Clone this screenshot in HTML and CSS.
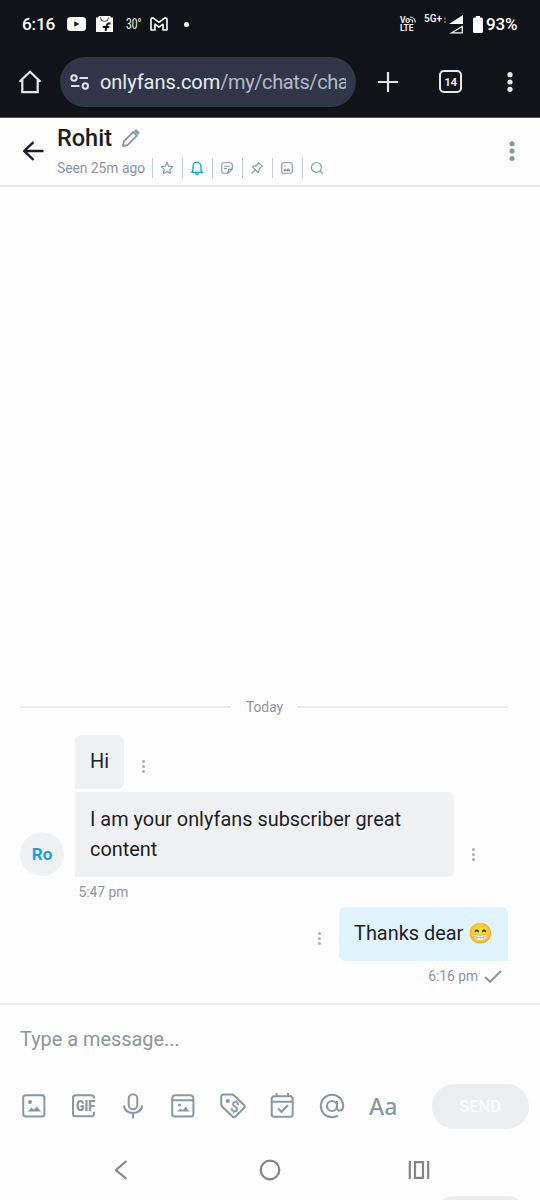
FILE: index.html
```html
<!DOCTYPE html>
<html lang="en">
<head>
    <meta charset="utf-8">
    <title>Chat with Rohit</title>
    <link rel="stylesheet" href="styles.css">
</head>
<body>
<div class="phone">

    <div class="status-bar">
        <span class="clock">6:16</span>
        <svg class="st-youtube" width="19" height="14" viewBox="0 0 19 14"><rect width="19" height="14" rx="3.5" fill="#fff"/><path d="M7.3 4.2v5.6L12.3 7z" fill="#121318"/></svg>
        <svg class="st-shop" width="17" height="17" viewBox="0 0 17 17"><path d="M0 1.5h2l1-1.5h11l1 1.5h2V16H0z" fill="#fff"/><path d="M4.5 1.5a4 4 0 0 0 8 0" fill="none" stroke="#121318" stroke-width="0.8"/><path d="M14.5 7.5h-1.7c-1.4 0-1.7.6-2 1.8L9.5 15M6.8 11h6.5" fill="none" stroke="#121318" stroke-width="1.9"/></svg>
        <span class="temp">30°</span>
        <svg class="st-mail" width="18" height="14" viewBox="0 0 18 14"><path d="M1 13V2.5C1 .8 2.6.5 3.8 1.4L9 5.3l5.2-3.9C15.4.5 17 .8 17 2.5V13h-4V7.2L9 10.2 5 7.2V13z" fill="none" stroke="#fff" stroke-width="1.6" stroke-linejoin="round"/></svg>
        <span class="dot"></span>
        <span class="volte"><span>Vo<svg width="6" height="7" viewBox="0 0 6 7"><path d="M0 1c3 0 5.3 2.3 5.3 5.5M0 3.5c1.7 0 2.8 1.2 2.8 3" fill="none" stroke="#fff" stroke-width="1.1"/></svg></span><span>LTE</span></span>
        <span class="net">5G+</span>
        <svg class="st-signal" width="19" height="19" viewBox="0 0 19 19"><path d="M1 2.5v2M1 6v2" stroke="#666870" stroke-width="2"/><path d="M19 0v9H5z" fill="#fff"/><path d="M18.3 11.5v6.3H7.5z" fill="none" stroke="#fff" stroke-width="1.2"/></svg>
        <svg class="st-battery" width="10" height="17" viewBox="0 0 10 17"><path d="M3 0h4v1.5h1.5Q10 1.5 10 3v12.5Q10 17 8.5 17h-7Q0 17 0 15.500V3q0-1.5 1.5-1.5H3z" fill="#fff"/></svg>
        <span class="percent">93%</span>
    </div>

    <div class="browser-bar">
        <svg class="home" width="24" height="24" viewBox="0 0 24 24"><path d="M1.5 11.8 12 1.8l10.5 10M4.3 9.500v12.7h15.4V9.500" fill="none" stroke="#e6e6ee" stroke-width="2.2"/></svg>
        <div class="url-bar">
            <svg width="20" height="16" viewBox="0 0 20 16" fill="none" stroke="#dfe3ef" stroke-width="2"><circle cx="4" cy="4" r="2.7"/><path d="M9.5 4H18M1 12h8.5"/><circle cx="15.3" cy="12" r="2.7"/></svg>
            <div class="url">onlyfans.com<span>/my/chats/chat</span></div>
        </div>
        <svg class="plus" width="20" height="20" viewBox="0 0 20 20"><path d="M10 0v20M0 10h20" stroke="#e6e6ee" stroke-width="2.2"/></svg>
        <div class="tabs">14</div>
        <svg class="menu" width="6" height="20" viewBox="0 0 6 20" fill="#e6e6ee"><circle cx="3" cy="2.7" r="2.6"/><circle cx="3" cy="10" r="2.6"/><circle cx="3" cy="17.3" r="2.6"/></svg>
    </div>

    <div class="chat-header">
        <svg class="back" width="22" height="20" viewBox="0 0 22 20"><path d="M20.5 10H1.500M10.500 1.200 1.200 10l9.300 8.800" fill="none" stroke="#1b1d22" stroke-width="2.3"/></svg>
        <div class="who">
            <div class="name-row">
                <span class="name">Rohit</span>
                <svg width="18" height="18" viewBox="0 0 18 18"><path d="M1 17l.8-4.600L11.300 3l3.600 3.600-9.500 9.500z" fill="none" stroke="#8a96a3" stroke-width="1.8" stroke-linejoin="round"/><path d="M12 2l1.300-1.300q.8-.8 1.700 0l2.200 2.200q.8.8 0 1.700L15.900 5.900z" fill="#8a96a3"/></svg>
            </div>
            <div class="tools">
                <span class="seen">Seen 25m ago</span>
                <span class="tool"><svg width="14" height="14" viewBox="0 0 24 24"><path d="M12 2.500l2.900 6.400 7 .8-5.200 4.700 1.400 6.900-6.100-3.500-6.100 3.500 1.400-6.900L2.100 9.700l7-.8z"/></svg></span>
                <span class="tool active"><svg width="14" height="14" viewBox="0 0 24 24"><path d="M1.500 19.500h21M4 19c1.500-2 1.200-5 1.200-8.500C5.200 6 8 2 12 2s6.800 4 6.800 8.500c0 3.500-.3 6.500 1.200 8.500M9.500 20c.2 3.500 4.800 3.500 5 0"/></svg></span>
                <span class="tool"><svg width="14" height="14" viewBox="0 0 24 24"><path d="M6 3h12q3 0 3 3v8l-7 7H6q-3 0-3-3V6q0-3 3-3zM14 21v-4q0-3 3-3h4M7 9h10M7 13h5"/></svg></span>
                <span class="tool"><svg width="14" height="14" viewBox="0 0 24 24"><path d="M14.500 2.500l7 7-2.500.7-3.800 3.800c.7 2.500.2 4.300-1.200 5.800L4.200 10c1.500-1.400 3.300-1.900 5.800-1.200L13.800 5zM9 15l-6.500 6.500"/></svg></span>
                <span class="tool"><svg width="14" height="14" viewBox="0 0 24 24"><rect x="3" y="3" width="18" height="18" rx="3"/><path d="M7 8.500h2.500M7 16.500l2-2 2 2 3-3 3 3z"/></svg></span>
                <span class="tool"><svg width="14" height="14" viewBox="0 0 24 24"><circle cx="11" cy="11" r="8.500"/><path d="M17 17l5 5"/></svg></span>
            </div>
        </div>
        <svg class="more" width="6" height="20" viewBox="0 0 6 20" fill="#8a9299"><circle cx="3" cy="2.700" r="2.500"/><circle cx="3" cy="10.100" r="2.500"/><circle cx="3" cy="17.500" r="2.500"/></svg>
    </div>

    <div class="messages">
        <div class="day"><span>Today</span></div>
        <div class="msg first">
            <div class="bubble hi">Hi</div>
            <div class="dots"><i></i><i></i><i></i></div>
        </div>
        <div class="msg">
            <div class="avatar">Ro</div>
            <div class="bubble long">I am your onlyfans subscriber great content</div>
            <div class="dots"><i></i><i></i><i></i></div>
        </div>
        <div class="time">5:47 pm</div>
        <div class="msg mine">
            <div class="dots"><i></i><i></i><i></i></div>
            <div class="bubble sent">Thanks dear <span class="emoji">😁</span></div>
        </div>
        <div class="time mine">6:16 pm <svg width="18" height="13" viewBox="0 0 18 13"><path d="M1 7l5 4.800L17 1" fill="none" stroke="#8a96a3" stroke-width="2"/></svg></div>
    </div>

    <div class="composer">
        <div class="placeholder">Type a message...</div>
        <div class="actions">
            <svg class="ic" viewBox="0 0 26 26"><rect x="2.200" y="2.200" width="21.200" height="21.200" rx="2.500"/><circle class="fill" cx="9" cy="9" r="2"/><path class="fill" d="M6.500 18.500l4-4 2.500 2.200 3-3.200 4 5z"/></svg>
            <svg class="ic" viewBox="0 0 26 26"><path d="M24 5.500V4.700q0-2.500-2.500-2.500h-16q-2.500 0-2.500 2.500v16q0 2.500 2.500 2.500h16q2.500 0 2.500-2.500v-2"/><text x="6" y="17.800" textLength="19" lengthAdjust="spacingAndGlyphs">GIF</text></svg>
            <svg class="ic" viewBox="0 0 26 26"><rect x="8.700" y="1.200" width="8.600" height="15" rx="4.300"/><path d="M4 12.500c0 10 18 10 18 0M13 20v5.500"/></svg>
            <svg class="ic" viewBox="0 0 26 26"><path d="M2.200 7.200h21.200v13.700q0 2.500-2.500 2.500H4.700q-2.500 0-2.500-2.500zM2.200 8V6q0-3.800 3.200-3.800h14.800q3.200 0 3.200 3.800v2"/><circle class="fill" cx="9.500" cy="12" r="1.500"/><path class="fill" d="M7 18.500l3.300-3 2.200 1.800 3-3.500 4 4.700z"/></svg>
            <svg class="ic" viewBox="0 0 26 26"><path d="M1.200 4q0-2.500 2.500-2.500h8q1.500 0 2.700 1.200L24 12q1.500 1.500 0 3l-8.500 8.500q-1.500 1.500-3 0L2.500 14q-1.300-1.200-1.300-2.800z"/><circle class="fill" cx="7.800" cy="8" r="2"/><text class="dollar" x="10.300" y="18.800" transform="rotate(12 14 14)">$</text></svg>
            <svg class="ic" viewBox="0 0 26 26"><rect x="2.700" y="3.200" width="21" height="20.500" rx="2.500"/><path d="M3 8.700h20.500M7.700 0v3M19 0v3M9 15.500l3.500 3.300 6.500-6.600"/></svg>
            <svg class="ic" viewBox="0 0 26 26"><circle cx="13" cy="13" r="5"/><path d="M18 8v6.200c0 5 6.200 4.500 6.200-1.200a11.200 11.200 0 1 0-11.200 11.200q3.500 0 6-1.500"/></svg>
            <span class="font-btn">Aa</span>
            <div class="send">SEND</div>
        </div>
    </div>

    <div class="nav">
        <svg width="14" height="20" viewBox="0 0 14 20"><path d="M12.500 1L2 10l10.500 9"/></svg>
        <svg class="nav-home" width="22" height="22" viewBox="0 0 22 22"><circle cx="11" cy="11" r="9.300"/></svg>
        <svg width="22" height="18" viewBox="0 0 22 18"><path d="M1.800 0v18M20.200 0v18M7 1.200h8v15.600H7z"/></svg>
    </div>
    <div class="peek"></div>

</div>
</body>
</html>
```
FILE: styles.css
```css
body {
    margin: 0;
    background: #fefefe;
    font-family: Roboto, "Liberation Sans", sans-serif;
}

.phone {
    display: flex;
    flex-direction: column;
    width: 540px;
    height: 1200px;
    overflow: hidden;
}

svg {
    flex: none;
    display: block;
}

/* android status bar */
.status-bar {
    display: flex;
    align-items: center;
    box-sizing: border-box;
    height: 48px;
    padding-left: 22px;
    background: #121318;
    color: #fff;
    flex: none;
    white-space: nowrap;
}

.clock {
    width: 45px;
    font-size: 17.3px;
    font-weight: 500;
    letter-spacing: -0.2px;
}

.st-shop { margin-left: 10px; }

.temp {
    width: 24px;
    margin-left: 13px;
    font-size: 14.5px;
    transform: scaleX(0.7);
    transform-origin: left;
}

.dot {
    width: 5px;
    height: 5px;
    margin-left: 16px;
    border-radius: 50%;
    background: #fff;
}

.volte {
    display: flex;
    flex-direction: column;
    width: 24px;
    margin-left: 211px;
    font-size: 8.5px;
    font-weight: 600;
    line-height: 8.5px;
}

.volte span { display: flex; }

.net {
    width: 19px;
    margin-bottom: 11px;
    font-size: 10px;
    font-weight: 500;
}

.st-signal { margin-left: 1px; }
.st-battery { margin-left: 10px; }

.percent {
    margin-left: 3px;
    font-size: 17px;
    font-weight: 500;
    letter-spacing: -0.2px;
}

/* browser toolbar */
.browser-bar {
    display: flex;
    align-items: center;
    box-sizing: border-box;
    height: 70px;
    padding: 0 0 2px 18px;
    border-bottom: 1px solid #55565a;
    background: #121318;
    flex: none;
}

.url-bar {
    display: flex;
    align-items: center;
    box-sizing: border-box;
    width: 296px;
    height: 50px;
    margin: 0 22px 0 18px;
    padding: 0 10px;
    border-radius: 25px;
    background: #303647;
}

.url {
    width: 246px;
    margin-left: 10px;
    overflow: hidden;
    white-space: nowrap;
    font-size: 20px;
    letter-spacing: -0.05px;
    color: #e8ebf5;
}

.url span {
    letter-spacing: -0.4px;
    color: #b4b9c7;
}

.tabs {
    display: flex;
    align-items: center;
    justify-content: center;
    box-sizing: border-box;
    width: 23px;
    height: 23px;
    margin: 0 45px 0 41px;
    border: 2px solid #e6e6ee;
    border-radius: 5px;
    color: #e6e6ee;
    font-size: 11.5px;
    font-weight: 700;
    letter-spacing: -0.4px;
}

/* chat header */
.chat-header {
    display: flex;
    align-items: center;
    box-sizing: border-box;
    height: 69px;
    padding: 0 25px 0 23px;
    border-bottom: 2px solid #e8e8ea;
    flex: none;
}

.who {
    flex: 1;
    margin-left: 12px;
}

.name-row {
    display: flex;
    align-items: center;
    height: 30px;
    margin-top: 2px;
}

.name {
    width: 65px;
    font-size: 23.5px;
    font-weight: 500;
    color: #1b1d22;
}

.tools {
    display: flex;
    align-items: center;
    height: 30px;
}

.seen {
    width: 95px;
    font-size: 13.8px;
    color: #8a96a3;
    white-space: nowrap;
}

.tool {
    display: flex;
    align-items: center;
    justify-content: center;
    box-sizing: border-box;
    width: 30px;
    height: 20px;
    padding-right: 2px;
    border-left: 1px solid #c5ccd3;
}

.tool svg {
    fill: none;
    stroke: #8a96a3;
    stroke-width: 2;
    stroke-linejoin: round;
}

.tool.active svg {
    stroke: #00aff0;
    stroke-width: 2.4;
}

.more, .back { margin-bottom: 1px; }

/* conversation */
.messages {
    display: flex;
    flex-direction: column;
    justify-content: flex-end;
    box-sizing: border-box;
    flex: 1;
    padding: 0 32px 12px 20px;
}

.day {
    display: flex;
    align-items: center;
    height: 20px;
    margin-bottom: 18px;
    color: #8a96a3;
    font-size: 13.8px;
}

.day::before,
.day::after {
    content: "";
    flex: 1;
    height: 2px;
    background: #e9ebed;
}

.day span { margin: 0 14px 0 15px; }

.msg {
    display: flex;
    align-items: flex-end;
}

.msg.first {
    margin-bottom: 3px;
    padding-left: 55px;
}

.msg.mine { justify-content: flex-end; }

.bubble {
    box-sizing: border-box;
    padding: 12.5px 15px 12px;
    background: #f0f1f3;
    font-size: 19.9px;
    line-height: 30px;
    color: #1e2126;
}

.hi { border-radius: 6px 6px 6px 0; }

.long {
    width: 378.5px;
    margin-left: 11px;
    border-radius: 0 6px 6px 0;
}

.sent {
    border-radius: 6px 6px 0 6px;
    background: #e0f4fe;
}

.emoji { font-family: "Noto Color Emoji", Roboto, sans-serif; }

.avatar {
    display: flex;
    align-items: center;
    justify-content: center;
    width: 44px;
    height: 44px;
    margin-bottom: 1px;
    border-radius: 50%;
    background: #f0f1f3;
    color: #1a9fe0;
    font-size: 17px;
    font-weight: 700;
}

.dots {
    display: flex;
    flex-direction: column;
    gap: 2px;
    margin: 0 18px 16px;
}

.dots i {
    width: 3px;
    height: 3px;
    border-radius: 50%;
    background: #a9aeb6;
}

.time {
    display: flex;
    align-items: center;
    height: 30px;
    padding-left: 58.5px;
    color: #8a96a3;
    font-size: 13.8px;
}

.time.mine {
    justify-content: flex-end;
    gap: 6px;
    padding: 0 6px 0 0;
}

/* composer */
.composer {
    box-sizing: border-box;
    height: 137px;
    border-top: 2px solid #ebecee;
    flex: none;
}

.placeholder {
    padding: 22px 20px 0;
    font-size: 19.9px;
    line-height: 26px;
    color: #8a96a3;
}

.actions {
    display: flex;
    align-items: center;
    height: 46px;
    margin-top: 30px;
    padding-left: 20.5px;
}

.ic {
    width: 26px;
    height: 26px;
    margin-right: 23.8px;
    fill: none;
    stroke: #8a96a3;
    stroke-width: 2;
    overflow: visible;
}

.ic .fill {
    fill: #8a96a3;
    stroke: none;
}

.ic text {
    fill: #8a96a3;
    stroke: none;
    font-size: 14px;
    font-weight: 900;
}

.ic .dollar {
    font-size: 15px;
    font-weight: 600;
}

.font-btn {
    width: 62.5px;
    color: #8a96a3;
    font-family: "Noto Sans", Roboto, sans-serif;
    font-size: 23px;
    font-weight: 500;
}

.send {
    display: flex;
    align-items: center;
    justify-content: center;
    width: 97px;
    height: 45px;
    border-radius: 23px;
    background: #edeef0;
    color: #fafafb;
    font-size: 16.5px;
    font-weight: 600;
}

/* gesture buttons */
.nav {
    display: flex;
    align-items: center;
    justify-content: space-between;
    box-sizing: border-box;
    height: 56px;
    padding: 4px 110px 0 114px;
    flex: none;
}

.nav svg {
    fill: none;
    stroke: #858585;
    stroke-width: 2.2;
}

.nav .nav-home { margin-left: 4px; }

/* top edge of the control cut off by the screen */
.peek {
    width: 97px;
    height: 45px;
    margin: 0 0 -41px 432px;
    border-radius: 23px;
    background: #edeef0;
    flex: none;
}
```
